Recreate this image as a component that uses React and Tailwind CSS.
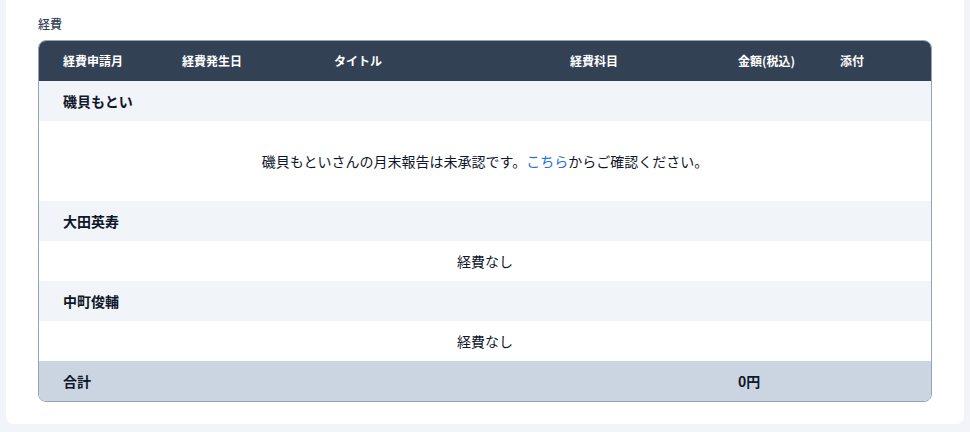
import React from "react";

const font = { fontFamily: '"Noto Sans CJK JP", "Noto Sans", sans-serif' };

function NameRow({ name }) {
  return (
    <div className="h-10 flex items-center px-6 bg-[#f1f5f9] text-sm font-bold text-[#0f172a]">
      {name}
    </div>
  );
}

function EmptyRow() {
  return (
    <div className="h-10 flex items-center justify-center bg-white text-sm text-[#0f172a]">
      経費なし
    </div>
  );
}

export default function App() {
  return (
    <div className="min-h-[432px] bg-[#f1f5f9] px-[6px] pb-2" style={font}>
      <div className="bg-white rounded-b-lg px-8 pt-4 pb-[22px]">
        <div className="text-xs leading-4 font-medium text-[#334155] mb-2">経費</div>
        <div className="border border-[#94a3b8] rounded-lg overflow-hidden">
          <div className="grid grid-cols-[119px_144px_112px_300px_102px_1fr] h-10 items-center bg-[#334155] text-xs font-bold text-white">
            <div className="pl-6">経費申請月</div>
            <div className="pl-6">経費発生日</div>
            <div className="text-center">タイトル</div>
            <div className="pl-[60px] text-center">経費科目</div>
            <div className="pl-6">金額(税込)</div>
            <div className="pl-6">添付</div>
          </div>
          <NameRow name="磯貝もとい" />
          <div className="h-20 flex items-center justify-center bg-white text-sm text-[#0f172a]">
            <span>
              磯貝もといさんの月末報告は未承認です。
              <span className="text-[#1d6fdc]">こちら</span>
              からご確認ください。
            </span>
          </div>
          <NameRow name="大田英寿" />
          <EmptyRow />
          <NameRow name="中町俊輔" />
          <EmptyRow />
          <div className="grid grid-cols-[119px_144px_112px_300px_102px_1fr] h-10 items-center bg-[#cbd5e1] text-sm font-bold text-[#0f172a]">
            <div className="pl-6">合計</div>
            <div></div>
            <div></div>
            <div></div>
            <div className="pl-6">0円</div>
            <div></div>
          </div>
        </div>
      </div>
    </div>
  );
}
